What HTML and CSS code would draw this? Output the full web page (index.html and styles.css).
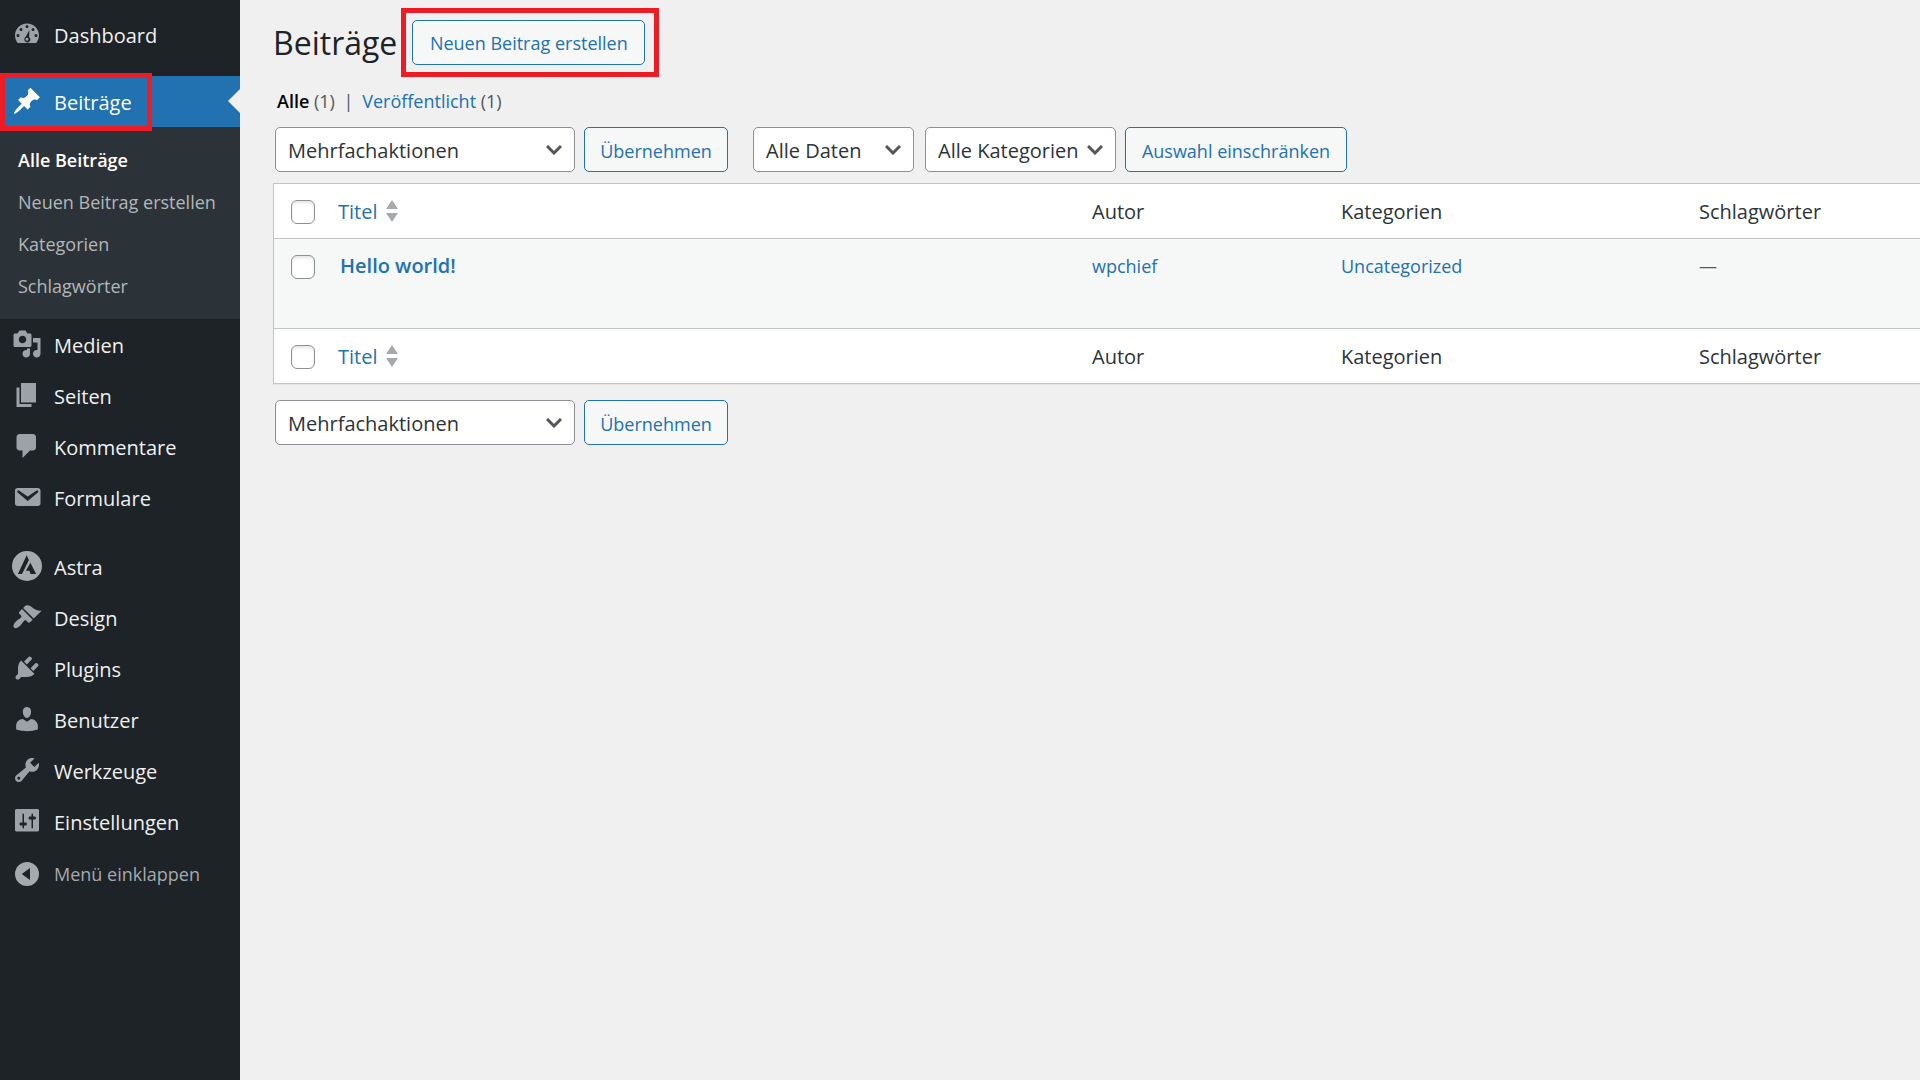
FILE: index.html
```html
<!DOCTYPE html>
<html lang="de">
<head>
<meta charset="utf-8">
<title>Beiträge</title>
<meta name="viewport" content="width=device-width, initial-scale=1">
<link rel="stylesheet" href="styles.css">
</head>
<body>
<div class="layout">
  <nav class="sidebar" aria-label="Hauptmenü">
    <ul class="menu">
      <li><a class="menu-link" href="#"><svg class="icon" viewBox="0 0 20 20"><path fill-rule="evenodd" d="M3.76 16h12.48A7.96 7.96 0 0 0 18 11c0-4.42-3.58-8-8-8s-8 3.58-8 8c0 1.89.66 3.63 1.76 5zM10 4a1 1 0 1 1 0 2 1 1 0 0 1 0-2zM6 6a1 1 0 1 1 0 2 1 1 0 0 1 0-2zm8 0a1 1 0 1 1 0 2 1 1 0 0 1 0-2zM4 10a1 1 0 1 1 0 2 1 1 0 0 1 0-2zm12 0a1 1 0 1 1 0 2 1 1 0 0 1 0-2zm-4.400-2.600l-.2 4.600a2 2 0 1 1-2.200-.100zM10 12.500a1 1 0 1 0 0 2 1 1 0 0 0 0-2z"/></svg>Dashboard</a></li>
      <li class="menu-separator" role="separator"></li>
      <li class="menu-current">
        <a class="menu-link" href="#" aria-current="page"><svg class="icon" viewBox="0 0 20 20"><path d="M10.440 3.020l1.820-1.820 6.360 6.350-1.830 1.820c-1.050-.68-2.480-.57-3.410.36l-.75.75c-.92.93-1.040 2.350-.35 3.410l-1.830 1.820-2.410-2.410-2.800 2.790c-.42.42-3.380 2.710-3.800 2.290s1.860-3.390 2.280-3.810l2.790-2.790L4.100 9.360l1.830-1.820c1.050.69 2.480.57 3.400-.36l.75-.75c.93-.92 1.050-2.350.36-3.410z"/></svg>Beiträge</a>
        <span class="highlight highlight-menu"></span>
      </li>
      <li>
        <ul class="submenu">
          <li><a class="submenu-link submenu-active" href="#">Alle Beiträge</a></li>
          <li><a class="submenu-link" href="#">Neuen Beitrag erstellen</a></li>
          <li><a class="submenu-link" href="#">Kategorien</a></li>
          <li><a class="submenu-link" href="#">Schlagwörter</a></li>
        </ul>
      </li>
      <li><a class="menu-link" href="#"><svg class="icon" viewBox="0 0 20 20"><path d="M13 11V4c0-.55-.45-1-1-1h-1.670L9 1H5L3.670 3H2c-.55 0-1 .45-1 1v7c0 .55.45 1 1 1h10c.55 0 1-.45 1-1zM7 4.500c1.380 0 2.500 1.120 2.500 2.500S8.380 9.500 7 9.500 4.500 8.380 4.500 7 5.620 4.500 7 4.500zM14 6h5v10.500c0 1.380-1.120 2.500-2.500 2.500S14 17.880 14 16.500s1.120-2.500 2.500-2.500c.17 0 .34.02.5.05V9h-3V6zm-4 8.050V13h2v3.500c0 1.380-1.120 2.500-2.500 2.500S7 17.880 7 16.500 8.120 14 9.500 14c.17 0 .34.02.5.05z"/></svg>Medien</a></li>
      <li><a class="menu-link" href="#"><svg class="icon" viewBox="0 0 20 20"><path d="M6 15V2h10v13H6zm-1 1h8v2H3V5h2v11z"/></svg>Seiten</a></li>
      <li><a class="menu-link" href="#"><svg class="icon" viewBox="0 0 20 20"><path d="M5 2h9c1.100 0 2 .9 2 2v7c0 1.100-.9 2-2 2h-2l-5 5v-5H5c-1.100 0-2-.9-2-2V4c0-1.100.9-2 2-2z"/></svg>Kommentare</a></li>
      <li><a class="menu-link" href="#"><svg class="icon" viewBox="0 0 20 20"><path d="M3.870 4h13.250C18.370 4 19 4.590 19 5.790v8.420c0 1.190-.63 1.790-1.880 1.790H3.870c-1.250 0-1.880-.6-1.880-1.790V5.790c0-1.200.63-1.790 1.880-1.790zm6.620 8.600l6.740-5.530c.24-.2.43-.66.13-1.070-.29-.41-.82-.42-1.170-.17l-5.700 3.860L4.800 5.830c-.35-.25-.88-.24-1.170.17-.3.41-.11.87.13 1.070z"/></svg>Formulare</a></li>
      <li class="menu-separator menu-separator-plugins" role="separator"></li>
      <li><a class="menu-link" href="#"><svg class="icon icon-gray" viewBox="0 0 30 30"><path fill-rule="evenodd" d="M15 0a15 15 0 1 1 0 30 15 15 0 0 1 0-30zM14.700 4.300L5.900 23h4.100l6.900-14.100zM18.400 11.700l-4.500 8.100h3.500l1.200 3.200h5.500z"/></svg>Astra</a></li>
      <li><a class="menu-link" href="#"><svg class="icon" viewBox="0 0 20 20"><path d="M14.480 11.060L7.410 3.990l1.500-1.500c.5-.56 2.300-.47 3.510.32 1.210.8 1.430 1.280 2.910 2.100 1.180.64 2.450 1.260 4.450.85zm-.71.71L6.700 4.700 4.930 6.470c-.39.39-.39 1.020 0 1.410l1.060 1.060c.39.39.39 1.030 0 1.420-.6.6-1.430 1.110-2.210 1.690-.35.26-.7.53-1.010.84C1.430 14.230.4 16.080 1.400 17.070c.99 1 2.840-.03 4.180-1.360.31-.31.58-.66.85-1.020.57-.78 1.080-1.610 1.690-2.210.39-.39 1.020-.39 1.410 0l1.060 1.060c.39.39 1.020.39 1.410 0z"/></svg>Design</a></li>
      <li><a class="menu-link" href="#"><svg class="icon" viewBox="0 0 20 20"><path d="M13.110 4.360L9.870 7.600 8 5.730l3.240-3.240c.35-.34 1.050-.2 1.560.32.52.51.66 1.210.31 1.550zm-8 1.770l.91-1.120 9.010 9.010-1.190.84c-.71.71-2.630 1.160-3.820 1.160H6.140L4.900 17.260c-.59.59-1.540.59-2.120 0-.59-.58-.59-1.530 0-2.120l1.240-1.240v-3.880c0-1.130.4-3.190 1.090-3.890zm7.260 3.970l3.240-3.240c.34-.35 1.040-.21 1.550.31.52.51.66 1.210.31 1.550l-3.240 3.250z"/></svg>Plugins</a></li>
      <li><a class="menu-link" href="#"><svg class="icon" viewBox="0 0 20 20"><path d="M10 9.250c-2.270 0-2.730-3.440-2.730-3.440C7 4.020 7.820 2 9.970 2c2.160 0 2.980 2.020 2.710 3.810 0 0-.41 3.440-2.680 3.440zm0 2.570L12.720 10c2.390 0 4.520 2.330 4.520 4.530v2.490s-3.650 1.130-7.240 1.130c-3.650 0-7.240-1.130-7.240-1.130v-2.490c0-2.250 1.940-4.480 4.470-4.480z"/></svg>Benutzer</a></li>
      <li><a class="menu-link" href="#"><svg class="icon" viewBox="0 0 20 20"><path d="M16.680 9.770c-1.340 1.340-3.300 1.670-4.950.99l-5.410 6.520c-.99.99-2.590.99-3.580 0s-.99-2.590 0-3.570l6.520-5.420c-.68-1.650-.35-3.610.99-4.950 1.280-1.280 3.120-1.620 4.720-1.060l-2.890 2.890 2.820 2.820 2.860-2.870c.53 1.580.18 3.390-1.080 4.650zM3.810 16.210c.4.39 1.040.39 1.430 0 .4-.4.4-1.040 0-1.430-.39-.4-1.030-.4-1.430 0-.39.39-.39 1.030 0 1.430z"/></svg>Werkzeuge</a></li>
      <li><a class="menu-link" href="#"><svg class="icon" viewBox="0 0 20 20"><path fill-rule="evenodd" d="M18 16V3c0-.55-.45-1-1-1H3c-.55 0-1 .45-1 1v13c0 .55.45 1 1 1h14c.55 0 1-.45 1-1zM8 11h1c.55 0 1 .45 1 1s-.45 1-1 1H8v1.500c0 .28-.22.5-.5.5s-.5-.22-.5-.5V13H6c-.55 0-1-.45-1-1s.45-1 1-1h1V5.500c0-.28.22-.5.5-.5s.5.22.5.5V11zm5-2h-1c-.55 0-1-.45-1-1s.45-1 1-1h1V5.500c0-.28.22-.5.5-.5s.5.22.5.5V7h1c.55 0 1 .45 1 1s-.45 1-1 1h-1v5.500c0 .28-.22.5-.5.5s-.5-.22-.5-.5V9z"/></svg>Einstellungen</a></li>
      <li><button class="menu-link menu-collapse" type="button"><svg class="icon icon-gray" viewBox="0 0 20 20"><path fill-rule="evenodd" d="M10 2a8 8 0 1 1 0 16 8 8 0 0 1 0-16zM12 6l-5.500 4 5.500 4z"/></svg>Menü einklappen</button></li>
    </ul>
  </nav>

  <main class="content">
    <header class="page-head">
      <h1 class="page-title">Beiträge</h1>
      <div class="highlight-anchor">
        <button class="button button-new" type="button">Neuen Beitrag erstellen</button>
        <span class="highlight highlight-action"></span>
      </div>
    </header>

    <div class="views">
      <a class="view-current" href="#">Alle</a> <span class="count">(1)</span>
      <span class="views-divider">|</span>
      <a href="#">Veröffentlicht</a> <span class="count">(1)</span>
    </div>

    <div class="toolbar">
      <select class="select select-bulk" aria-label="Mehrfachaktion wählen"><option>Mehrfachaktionen</option></select>
      <button class="button button-apply" type="button">Übernehmen</button>
      <select class="select select-date" aria-label="Nach Datum filtern"><option>Alle Daten</option></select>
      <select class="select select-category" aria-label="Nach Kategorie filtern"><option>Alle Kategorien</option></select>
      <button class="button button-filter" type="button">Auswahl einschränken</button>
    </div>

    <table class="posts">
      <colgroup><col class="col-check"><col><col class="col-author"><col class="col-category"><col class="col-tags"></colgroup>
      <thead>
        <tr>
          <td class="check"><input type="checkbox" aria-label="Alle auswählen"></td>
          <th scope="col"><a class="sort" href="#">Titel<svg class="sort-icon" viewBox="0 0 12 22"><path d="M6 0l6 9H0zM0 13h12l-6 9z"/></svg></a></th>
          <th scope="col">Autor</th>
          <th scope="col">Kategorien</th>
          <th scope="col">Schlagwörter</th>
        </tr>
      </thead>
      <tbody>
        <tr>
          <td class="check"><input type="checkbox" aria-label="Hello world! auswählen"></td>
          <td class="post-title"><a href="#">Hello world!</a></td>
          <td><a href="#">wpchief</a></td>
          <td><a href="#">Uncategorized</a></td>
          <td>—</td>
        </tr>
      </tbody>
      <tfoot>
        <tr>
          <td class="check"><input type="checkbox" aria-label="Alle auswählen"></td>
          <th scope="col"><a class="sort" href="#">Titel<svg class="sort-icon" viewBox="0 0 12 22"><path d="M6 0l6 9H0zM0 13h12l-6 9z"/></svg></a></th>
          <th scope="col">Autor</th>
          <th scope="col">Kategorien</th>
          <th scope="col">Schlagwörter</th>
        </tr>
      </tfoot>
    </table>

    <div class="toolbar toolbar-bottom">
      <select class="select select-bulk" aria-label="Mehrfachaktion wählen"><option>Mehrfachaktionen</option></select>
      <button class="button button-apply" type="button">Übernehmen</button>
    </div>
  </main>
</div>
</body>
</html>
```
FILE: styles.css
```css
* {
  box-sizing: border-box;
}

body {
  margin: 0;
  background: #f0f0f0;
  color: #2c3338;
  font: 18px/28px "Open Sans", "Noto Sans", sans-serif;
}

a {
  color: #2271b1;
  text-decoration: none;
}

.layout {
  display: flex;
  min-height: 100vh;
}

/* Sidebar */

.sidebar {
  flex: 0 0 240px;
  min-width: 0;
  padding-top: 9px;
  background: #1d2327;
}

.menu,
.submenu {
  margin: 0;
  padding: 0;
  list-style: none;
}

.menu-separator {
  height: 16px;
}

.menu-separator-plugins {
  height: 18px;
}

.menu-link {
  display: flex;
  align-items: center;
  gap: 12px;
  width: 100%;
  height: 51px;
  padding: 2px 12px 0;
  border: 0;
  background: none;
  color: #f0f0f1;
  font: 20px/28px "Open Sans", "Noto Sans", sans-serif;
  text-align: left;
}

.menu-collapse {
  color: #a7aaad;
  font-size: 18px;
}

.icon {
  flex: none;
  width: 30px;
  height: 30px;
  margin-bottom: 4px;
  fill: #9ca2a7;
}

.icon-gray {
  fill: #a7aaad;
}

.menu-collapse .icon {
  margin-bottom: 0;
}

.menu-current {
  position: relative;
  background: #2271b1;
}

.menu-current .menu-link {
  color: #fff;
}

.menu-current .icon {
  fill: #fff;
}

.menu-current::after {
  content: "";
  position: absolute;
  top: 13px;
  right: 0;
  border: 12px solid transparent;
  border-left: 0;
  border-right-color: #f0f0f0;
}

.submenu {
  padding: 12px 0;
  background: #2c3338;
}

.submenu-link {
  display: block;
  padding: 7px 18px;
  color: #b3b6b9;
  white-space: nowrap;
}

.submenu-active {
  color: #fff;
  font-weight: 600;
}

/* Red callout frames */

.highlight {
  position: absolute;
  z-index: 1;
  border: 5px solid #ed1c24;
  pointer-events: none;
}

.highlight-menu {
  top: -3px;
  bottom: -4px;
  left: 0;
  width: 152px;
}

.highlight-anchor {
  position: relative;
}

.highlight-action {
  inset: -12px -14px -12px -11px;
}

/* Content */

.content {
  flex: 1;
  min-width: 0;
  padding: 20px 0 0 33px;
}

.page-head {
  display: flex;
  align-items: center;
  gap: 15px;
}

.page-title {
  margin: 0;
  color: #1d2327;
  font-size: 32px;
  font-weight: 400;
  line-height: 45px;
}

.button {
  height: 45px;
  padding: 0 12px;
  border: 1px solid #2271b1;
  border-radius: 5px;
  background: #f6f7f7;
  color: #2271b1;
  font: inherit;
  white-space: nowrap;
}

.button-new {
  min-width: 233px;
}

.views {
  padding: 22px 0 12px 4px;
  color: #50575e;
}

.view-current {
  color: #000;
  font-weight: 600;
}

.views-divider {
  margin: 0 4px;
}

.toolbar {
  display: flex;
  gap: 9px;
  padding: 0 2px 11px;
}

.toolbar-bottom {
  padding-top: 16px;
}

.toolbar .button {
  padding-top: 2px;
}

.select {
  height: 45px;
  padding: 2px 36px 0 12px;
  border: 1px solid #8c8f94;
  border-radius: 5px;
  appearance: none;
  background: #fff url("data:image/svg+xml,%3Csvg xmlns='http://www.w3.org/2000/svg' viewBox='0 0 16 10'%3E%3Cpath d='M1 1l7 7 7-7' fill='none' stroke='%23555' stroke-width='3'/%3E%3C/svg%3E") no-repeat right 12px center / 16px 10px;
  color: #2c3338;
  font: 20px/28px "Open Sans", "Noto Sans", sans-serif;
}

.select-bulk {
  width: 300px;
}

.button-apply {
  width: 144px;
}

.select-date {
  width: 161px;
  margin: 0 2px 0 16px;
}

.select-category {
  width: 191px;
}

.button-filter {
  width: 222px;
}

/* Posts table */

.posts {
  width: 100%;
  border: 1px solid #c3c4c7;
  border-right: 0;
  border-spacing: 0;
  background: #fff;
  box-shadow: 0 1px 1px rgba(0, 0, 0, 0.04);
  table-layout: fixed;
}

.col-check {
  width: 52px;
}

.col-author {
  width: 249px;
}

.col-category {
  width: 358px;
}

.col-tags {
  width: 233px;
}

.posts th,
.posts td {
  padding: 13px 12px;
  text-align: left;
  vertical-align: top;
}

.posts th {
  padding: 14px 12px 12px;
  font-size: 20px;
  font-weight: 400;
}

.posts thead th,
.posts thead td,
.posts tbody td {
  border-bottom: 1px solid #c3c4c7;
}

.posts tbody td {
  height: 90px;
  background: #f6f7f7;
  color: #50575e;
}

.posts .check {
  padding: 16px 0 0 17px;
}

.posts .post-title {
  padding-left: 14px;
  font-size: 20px;
  font-weight: 600;
}

.posts input {
  display: block;
  width: 24px;
  height: 24px;
  margin: 0;
  border: 1px solid #8c8f94;
  border-radius: 6px;
  appearance: none;
  background: #fff;
  box-shadow: inset 0 2px 3px rgba(0, 0, 0, 0.1);
}

.sort {
  display: inline-flex;
  align-items: center;
  gap: 9px;
}

.sort-icon {
  width: 12px;
  height: 22px;
  margin-bottom: 3px;
  fill: #a7aaad;
}
```
